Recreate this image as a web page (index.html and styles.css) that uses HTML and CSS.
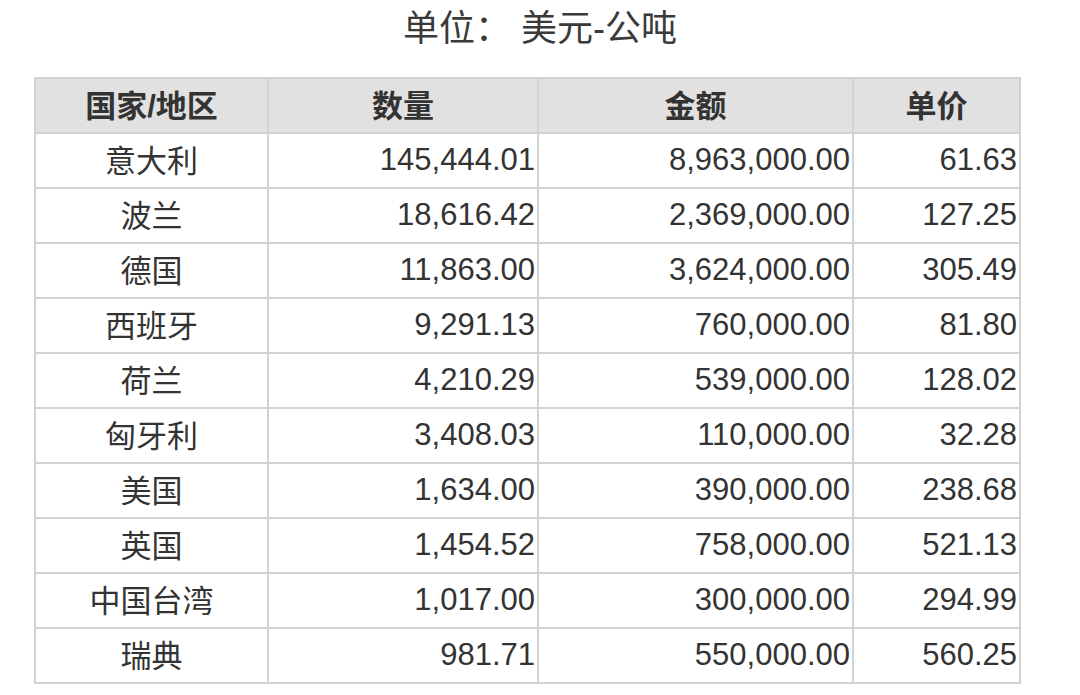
FILE: index.html
```html
<!DOCTYPE html>
<html lang="zh">
<head>
<meta charset="utf-8">
<link rel="stylesheet" href="styles.css">
</head>
<body>
<div class="title">单位：&nbsp;美元-公吨</div>
<table class="data">
  <colgroup>
    <col class="c1"><col class="c2"><col class="c3"><col class="c4">
  </colgroup>
  <thead>
    <tr><th>国家/地区</th><th>数量</th><th>金额</th><th>单价</th></tr>
  </thead>
  <tbody>
    <tr><td class="name">意大利</td><td>145,444.01</td><td>8,963,000.00</td><td>61.63</td></tr>
    <tr><td class="name">波兰</td><td>18,616.42</td><td>2,369,000.00</td><td>127.25</td></tr>
    <tr><td class="name">德国</td><td>11,863.00</td><td>3,624,000.00</td><td>305.49</td></tr>
    <tr><td class="name">西班牙</td><td>9,291.13</td><td>760,000.00</td><td>81.80</td></tr>
    <tr><td class="name">荷兰</td><td>4,210.29</td><td>539,000.00</td><td>128.02</td></tr>
    <tr><td class="name">匈牙利</td><td>3,408.03</td><td>110,000.00</td><td>32.28</td></tr>
    <tr><td class="name">美国</td><td>1,634.00</td><td>390,000.00</td><td>238.68</td></tr>
    <tr><td class="name">英国</td><td>1,454.52</td><td>758,000.00</td><td>521.13</td></tr>
    <tr><td class="name">中国台湾</td><td>1,017.00</td><td>300,000.00</td><td>294.99</td></tr>
    <tr><td class="name">瑞典</td><td>981.71</td><td>550,000.00</td><td>560.25</td></tr>
  </tbody>
</table>
</body>
</html>
```
FILE: styles.css
```css
html, body {
  margin: 0;
  padding: 0;
  background: #ffffff;
}
body {
  font-family: "Liberation Sans", "Noto Sans CJK SC", sans-serif;
  color: #333333;
  width: 1080px;
  height: 695px;
  overflow: hidden;
}
.title {
  height: 58px;
  line-height: 58px;
  margin-bottom: 19px;
  text-align: center;
  font-size: 36px;
  color: #3a3a3a;
}
.data {
  margin-left: 34px;
  width: 985px;
  border-collapse: collapse;
  table-layout: fixed;
  font-size: 31px;
}
.c1 { width: 233px; }
.c2 { width: 270px; }
.c3 { width: 315px; }
.c4 { width: 167px; }
.data th, .data td {
  border: 2px solid #d2d2d2;
  height: 55px;
  padding: 0 2px 0 0;
  white-space: nowrap;
  box-sizing: border-box;
}
.data th {
  background: #e1e1e1;
  font-weight: bold;
  text-align: center;
  color: #333333;
  padding: 0 0 5px 0;
}
.data td {
  text-align: right;
  color: #333333;
  padding-bottom: 1px;
}
.data td.name {
  text-align: center;
  padding: 0 0 5px 0;
}
```
